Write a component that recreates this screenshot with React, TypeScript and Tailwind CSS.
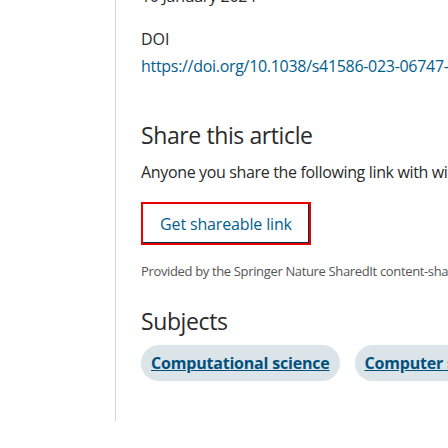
export default function App() {
  const subjects = ["Computational science", "Computer science"];

  return (
    <div className="h-[448px] w-[448px] overflow-hidden bg-white font-['Open_Sans',sans-serif] text-[#2a2a2a]">
      <div className="ml-[115px] flow-root h-[421px] border-l border-[#d5d5d5] pl-[25px]">
        <div className="-mt-[17px] whitespace-nowrap text-[16px] leading-[27px] tracking-[-0.3px]">10 January 2024</div>

        <div className="mt-[16px] text-[16px] leading-[27px]">DOI</div>
        <div className="whitespace-nowrap text-[16px] leading-[27px] tracking-[-0.3px] text-[#025e8d]">
          https://doi.org/10.1038/s41586-023-06747-5
        </div>

        <h3 className="mt-[39px] text-[23px] leading-[32px] tracking-[-0.4px]">Share this article</h3>
        <p className="mt-[8px] whitespace-nowrap text-[16px] leading-[27px] tracking-[-0.35px]">
          Anyone you share the following link with will be able to read this content:
        </p>

        <button className="mt-[16px] h-[43px] w-[170px] border-2 border-[#e00] text-[16px] tracking-[-0.15px] text-[#025e8d] shadow-[inset_-1px_-1px_0_#01324b]">
          Get shareable link
        </button>

        <p className="mt-[14px] whitespace-nowrap text-[13px] leading-[24px] tracking-[-0.35px] text-[#555]">
          Provided by the Springer Nature SharedIt content-sharing initiative
        </p>

        <h3 className="mt-[22px] text-[23px] leading-[32px] tracking-[-0.4px]">Subjects</h3>
        <ul className="mt-[8px] flex gap-[15px] whitespace-nowrap">
          {subjects.map((s) => (
            <li key={s} className="shrink-0 rounded-full bg-[#dae4e9] px-[10px] py-[6px]">
              <a href="#" className="text-[16px] font-bold leading-[24px] tracking-[-0.2px] text-[#03507c] underline">
                {s}
              </a>
            </li>
          ))}
        </ul>
      </div>
    </div>
  );
}
